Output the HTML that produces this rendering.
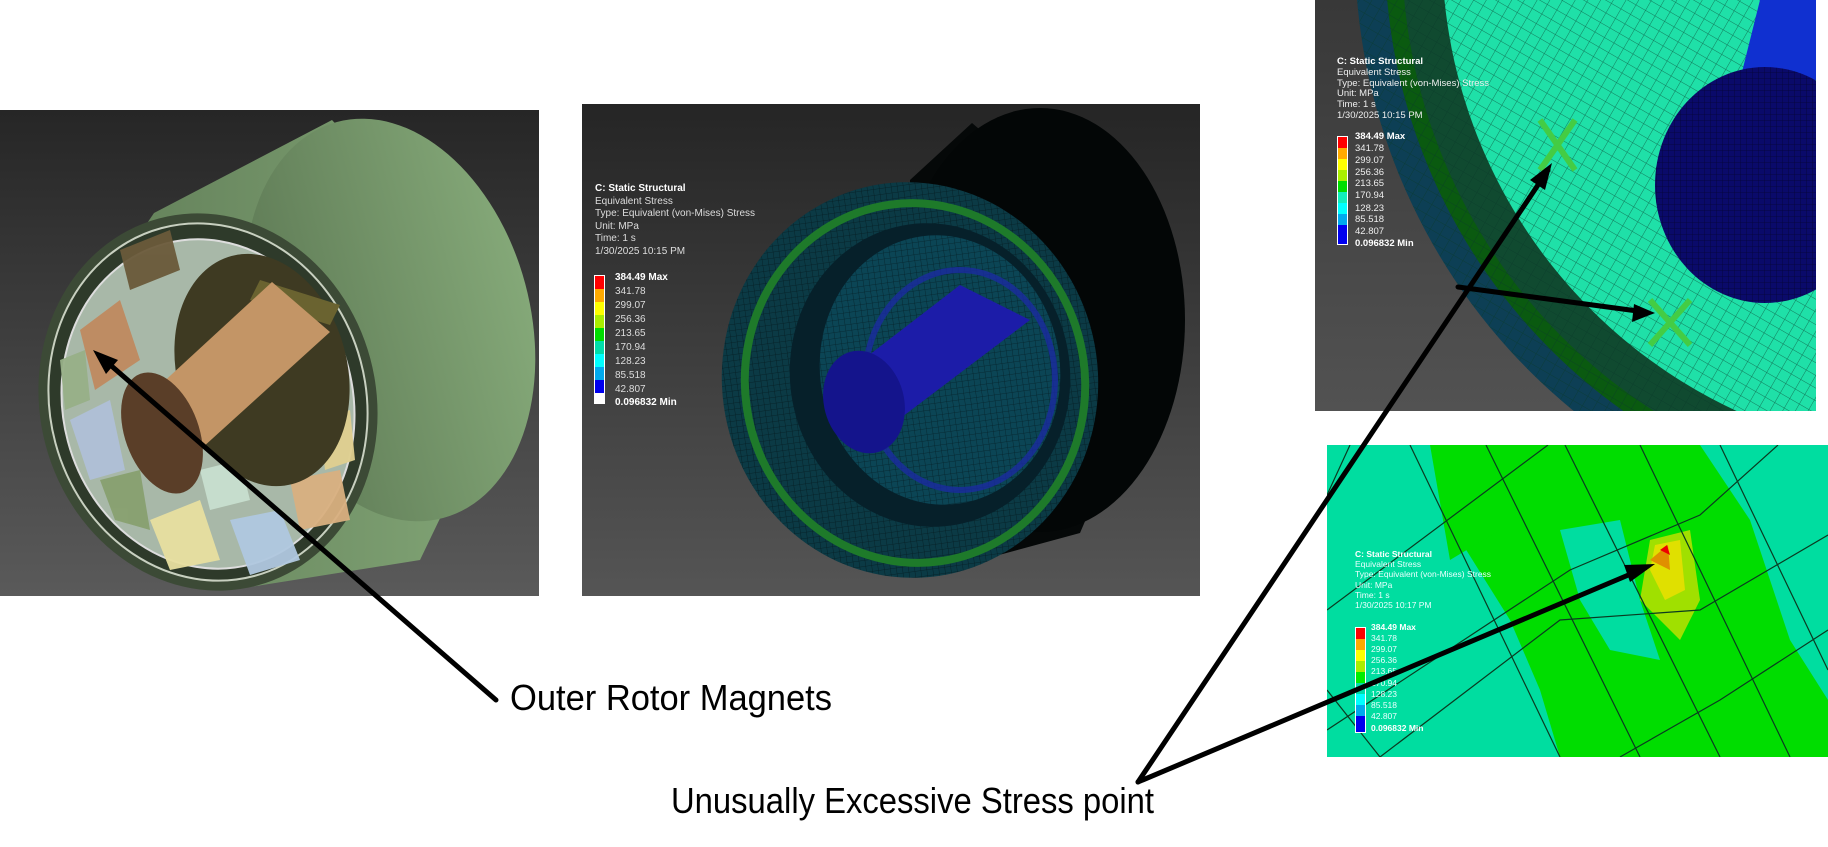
<!DOCTYPE html>
<html><head><meta charset="utf-8"><style>
html,body{margin:0;padding:0;background:#fff;}
svg{display:block;}
text{font-family:"Liberation Sans",sans-serif;}
</style></head><body>
<svg width="1828" height="847" viewBox="0 0 1828 847" xmlns="http://www.w3.org/2000/svg">
<defs>
<linearGradient id="g1" x1="0" y1="0" x2="0" y2="1"><stop offset="0" stop-color="#262626"/><stop offset="1" stop-color="#5a5a5a"/></linearGradient>
<linearGradient id="g2" x1="0" y1="0" x2="0" y2="1"><stop offset="0" stop-color="#252525"/><stop offset="1" stop-color="#555"/></linearGradient>
<linearGradient id="gc" x1="0" y1="0" x2="1" y2="0"><stop offset="0" stop-color="#5e7a55"/><stop offset="1" stop-color="#84a878"/></linearGradient>
<clipPath id="c1"><rect x="0" y="110" width="539" height="486"/></clipPath>
<clipPath id="c2"><rect x="582" y="104" width="618" height="492"/></clipPath>
<clipPath id="c3"><rect x="1315" y="0" width="501" height="411"/></clipPath>
<clipPath id="c4"><rect x="1327" y="445" width="501" height="312"/></clipPath>
<pattern id="mesh" width="6" height="6" patternUnits="userSpaceOnUse"><path d="M0 0H6M0 0V6" stroke="#000" stroke-width="0.8" opacity="0.5"/></pattern>
<pattern id="mesh3" width="11" height="11" patternUnits="userSpaceOnUse" patternTransform="rotate(30)"><path d="M0 0H11M0 0V11" stroke="#0a3a2a" stroke-width="1"/></pattern>
</defs>

<!-- Panel 1 -->
<g clip-path="url(#c1)">
<rect x="0" y="110" width="539" height="486" fill="url(#g1)"/>
<polygon points="154,213 332,120 529,333 420,560 231,590 39,383" fill="url(#gc)"/>
<ellipse cx="390" cy="320" rx="140" ry="205" transform="rotate(-15 390 320)" fill="url(#gc)"/>
<ellipse cx="208" cy="402" rx="168" ry="190" transform="rotate(-15 208 402)" fill="#3c4a36"/>
<ellipse cx="208" cy="402" rx="158" ry="180" transform="rotate(-15 208 402)" fill="#2e3a2a" stroke="#c8d0c0" stroke-width="2"/>
<ellipse cx="208" cy="404" rx="145" ry="166" transform="rotate(-15 208 404)" fill="#a8b8a8" stroke="#ddd" stroke-width="2"/>
<g opacity="0.95">
<path d="M80,330 L120,300 L140,360 L95,390Z" fill="#c08a60"/>
<path d="M70,420 L110,400 L125,470 L90,480Z" fill="#b0c0d8"/>
<path d="M150,520 L200,500 L220,560 L170,570Z" fill="#e8e0a0"/>
<path d="M230,520 L280,510 L300,560 L250,575Z" fill="#b0c8e0"/>
<path d="M290,480 L340,470 L350,520 L300,530Z" fill="#d9b080"/>
<path d="M120,250 L170,230 L180,270 L130,290Z" fill="#6a5a3a"/>
<path d="M100,480 L140,470 L150,530 L115,520Z" fill="#88a070"/>
<path d="M200,470 L240,460 L250,500 L210,510Z" fill="#c8e0d0"/>
<path d="M60,360 L85,350 L90,400 L65,410Z" fill="#98b088"/>
<path d="M320,420 L350,410 L355,460 L325,470Z" fill="#e0d090"/>
</g>
<ellipse cx="262" cy="370" rx="85" ry="118" transform="rotate(-15 262 370)" fill="#3e3a22"/>
<path d="M260,280 L340,305 L330,325 L250,300Z" fill="#6a6330"/>
<polygon points="133,410 272,282 330,332 191,458" fill="#c39566"/>
<ellipse cx="162" cy="433" rx="37" ry="63" transform="rotate(-20 162 433)" fill="#5a3e28"/>
</g>

<!-- Panel 2 -->
<g clip-path="url(#c2)">
<rect x="582" y="104" width="618" height="492" fill="url(#g2)"/>
<polygon points="910,180 972,123 1180,300 1080,533 918,577" fill="#050808"/>
<ellipse cx="1040" cy="320" rx="145" ry="212" fill="#030606"/>
<ellipse cx="910" cy="380" rx="188" ry="198" transform="rotate(-8 910 380)" fill="#0b3a45"/>
<ellipse cx="910" cy="380" rx="188" ry="198" transform="rotate(-8 910 380)" fill="url(#mesh)"/>
<ellipse cx="915" cy="383" rx="170" ry="180" transform="rotate(-8 915 383)" fill="none" stroke="#1e7a2a" stroke-width="8"/>
<ellipse cx="930" cy="375" rx="140" ry="152" transform="rotate(-8 930 375)" fill="#06202a"/>
<ellipse cx="940" cy="370" rx="120" ry="135" transform="rotate(-8 940 370)" fill="#0b4555"/>
<ellipse cx="940" cy="370" rx="120" ry="135" transform="rotate(-8 940 370)" fill="url(#mesh)"/>
<ellipse cx="960" cy="380" rx="95" ry="110" fill="none" stroke="#1a2aa0" stroke-width="6" opacity="0.8"/>
<polygon points="830,385 960,285 1030,320 898,420" fill="#1c1ca8"/>
<ellipse cx="864" cy="402" rx="40" ry="52" transform="rotate(-15 864 402)" fill="#14148c"/>
<g font-size="10" fill="#ddd">
<text x="595" y="191" font-weight="bold" fill="#fff">C: Static Structural</text>
<text x="595" y="204">Equivalent Stress</text>
<text x="595" y="216">Type: Equivalent (von-Mises) Stress</text>
<text x="595" y="229">Unit: MPa</text>
<text x="595" y="241">Time: 1 s</text>
<text x="595" y="254">1/30/2025 10:15 PM</text>
</g>
<g>
<rect x="594" y="275" width="11" height="129" fill="#fff"/>
<rect x="595" y="276" width="9" height="13" fill="#f00"/><rect x="595" y="289" width="9" height="13" fill="#fa0"/>
<rect x="595" y="302" width="9" height="13" fill="#ff0"/><rect x="595" y="315" width="9" height="13" fill="#ae0"/>
<rect x="595" y="328" width="9" height="13" fill="#0d0"/><rect x="595" y="341" width="9" height="13" fill="#0da"/>
<rect x="595" y="354" width="9" height="13" fill="#0ff"/><rect x="595" y="367" width="9" height="13" fill="#0ae"/>
<rect x="595" y="380" width="9" height="13" fill="#00e"/>
</g>
<g font-size="10" fill="#ddd">
<text x="615" y="280" font-weight="bold" fill="#fff">384.49 Max</text>
<text x="615" y="294">341.78</text><text x="615" y="308">299.07</text><text x="615" y="322">256.36</text>
<text x="615" y="336">213.65</text><text x="615" y="350">170.94</text><text x="615" y="364">128.23</text>
<text x="615" y="378">85.518</text><text x="615" y="392">42.807</text>
<text x="615" y="405" font-weight="bold" fill="#fff">0.096832 Min</text>
</g>
</g>

<!-- Panel 3 -->
<g clip-path="url(#c3)">
<rect x="1315" y="0" width="501" height="411" fill="#4a4a4a"/>
<rect x="1315" y="0" width="501" height="411" fill="url(#g1)" opacity="0.5"/>
<circle cx="1950" cy="-50" r="595" fill="#0d3f55"/>
<circle cx="1950" cy="-50" r="565" fill="#0a5a10"/>
<circle cx="1950" cy="-50" r="548" fill="#104a30"/>
<circle cx="1950" cy="-50" r="508" fill="#1fe0a8"/>
<circle cx="1950" cy="-50" r="595" fill="url(#mesh3)" opacity="0.6"/>
<polygon points="1760,0 1816,0 1816,80 1740,80" fill="#1030d0"/>
<ellipse cx="1765" cy="185" rx="110" ry="118" fill="#0a0a6a"/>
<ellipse cx="1765" cy="185" rx="110" ry="118" fill="url(#mesh)"/>
<path d="M1540,120 L1575,170 M1575,120 L1540,170" stroke="#4c4" stroke-width="6"/>
<path d="M1650,300 L1690,345 M1690,300 L1650,345" stroke="#4c4" stroke-width="6"/>
<g font-size="9.5" fill="#eee">
<text x="1337" y="64" font-weight="bold" fill="#fff">C: Static Structural</text>
<text x="1337" y="75">Equivalent Stress</text>
<text x="1337" y="86">Type: Equivalent (von-Mises) Stress</text>
<text x="1337" y="96">Unit: MPa</text>
<text x="1337" y="107">Time: 1 s</text>
<text x="1337" y="118">1/30/2025 10:15 PM</text>
</g>
<rect x="1337" y="136" width="11" height="109" fill="#fff"/>
<rect x="1338" y="137" width="9" height="11" fill="#f00"/><rect x="1338" y="148" width="9" height="11" fill="#fa0"/>
<rect x="1338" y="159" width="9" height="11" fill="#ff0"/><rect x="1338" y="170" width="9" height="11" fill="#ae0"/>
<rect x="1338" y="181" width="9" height="11" fill="#0d0"/><rect x="1338" y="192" width="9" height="11" fill="#1eb"/>
<rect x="1338" y="203" width="9" height="11" fill="#0ff"/><rect x="1338" y="214" width="9" height="11" fill="#0ae"/>
<rect x="1338" y="225" width="9" height="19" fill="#00e"/>
<g font-size="9.5" fill="#eee">
<text x="1355" y="139" font-weight="bold" fill="#fff">384.49 Max</text>
<text x="1355" y="151">341.78</text><text x="1355" y="163">299.07</text><text x="1355" y="175">256.36</text>
<text x="1355" y="186">213.65</text><text x="1355" y="198">170.94</text><text x="1355" y="211">128.23</text>
<text x="1355" y="222">85.518</text><text x="1355" y="234">42.807</text>
<text x="1355" y="246" font-weight="bold" fill="#fff">0.096832 Min</text>
</g>
</g>

<!-- Panel 4 -->
<g clip-path="url(#c4)">
<rect x="1327" y="445" width="501" height="312" fill="#00dda0"/>
<polygon points="1435,445 1700,445 1750,520 1790,640 1828,700 1828,757 1560,757 1540,690 1510,620 1460,540" fill="#00dd00"/>
<polygon points="1560,530 1620,520 1640,600 1660,660 1610,650 1580,600" fill="#00dda0"/>
<polygon points="1430,445 1490,445 1500,530 1450,560" fill="#00dd00"/>
<polygon points="1650,540 1690,530 1700,600 1680,640 1640,600" fill="#a0e000"/>
<polygon points="1655,545 1680,540 1685,590 1665,600 1650,570" fill="#e0e000"/>
<polygon points="1650,560 1668,545 1670,570" fill="#e09000"/>
<polygon points="1660,550 1667,545 1670,555" fill="#e00"/>
<g stroke="#0a3a20" stroke-width="1.2" fill="none">
<path d="M1327,495 L1350,445"/><path d="M1410,445 L1560,757"/><path d="M1486,445 L1640,757"/>
<path d="M1565,445 L1720,757"/><path d="M1640,445 L1790,757"/><path d="M1720,445 L1828,670"/>
<path d="M1327,610 L1548,445"/><path d="M1327,730 L1570,570 L1700,515 L1778,445"/>
<path d="M1380,757 L1560,620 L1700,610 L1828,535"/><path d="M1620,757 L1720,700 L1828,630"/>
<path d="M1327,690 L1380,757"/>
</g>
<g font-size="8.5" fill="#eaffff">
<text x="1355" y="557" font-weight="bold" fill="#fff">C: Static Structural</text>
<text x="1355" y="567">Equivalent Stress</text>
<text x="1355" y="577">Type: Equivalent (von-Mises) Stress</text>
<text x="1355" y="588">Unit: MPa</text>
<text x="1355" y="598">Time: 1 s</text>
<text x="1355" y="608">1/30/2025 10:17 PM</text>
</g>
<rect x="1355" y="627" width="11" height="106" fill="#fff"/>
<rect x="1356" y="628" width="9" height="11" fill="#f00"/><rect x="1356" y="639" width="9" height="11" fill="#fa0"/>
<rect x="1356" y="650" width="9" height="11" fill="#ff0"/><rect x="1356" y="661" width="9" height="11" fill="#ae0"/>
<rect x="1356" y="672" width="9" height="11" fill="#0e0"/><rect x="1356" y="683" width="9" height="11" fill="#0da"/>
<rect x="1356" y="694" width="9" height="11" fill="#0ff"/><rect x="1356" y="705" width="9" height="11" fill="#0ae"/>
<rect x="1356" y="716" width="9" height="16" fill="#00e"/>
<g font-size="8.5" fill="#eaffff">
<text x="1371" y="630" font-weight="bold" fill="#fff">384.49 Max</text>
<text x="1371" y="641">341.78</text><text x="1371" y="652">299.07</text><text x="1371" y="663">256.36</text>
<text x="1371" y="674">213.65</text><text x="1371" y="686">170.94</text><text x="1371" y="697">128.23</text>
<text x="1371" y="708">85.518</text><text x="1371" y="719">42.807</text>
<text x="1371" y="731" font-weight="bold" fill="#fff">0.096832 Min</text>
</g>
</g>

<!-- Arrows -->
<g stroke="#000" stroke-width="5" fill="none" stroke-linecap="round">
<path d="M496,700 L100,356"/>
<path d="M1138,782 L1548,170"/>
<path d="M1138,782 L1645,568"/>
<path d="M1458,287 L1645,312"/>
</g>
<g fill="#000">
<polygon points="93,350 118,360 106,374"/>
<polygon points="1552,163 1545,190 1530,180"/>
<polygon points="1655,564 1630,582 1624,565"/>
<polygon points="1655,313 1632,322 1634,304"/>
</g>

<text x="510" y="710" font-size="36" textLength="322" lengthAdjust="spacingAndGlyphs" fill="#000">Outer Rotor Magnets</text>
<text x="671" y="813" font-size="36" textLength="483" lengthAdjust="spacingAndGlyphs" fill="#000">Unusually Excessive Stress point</text>
</svg>
</body></html>
